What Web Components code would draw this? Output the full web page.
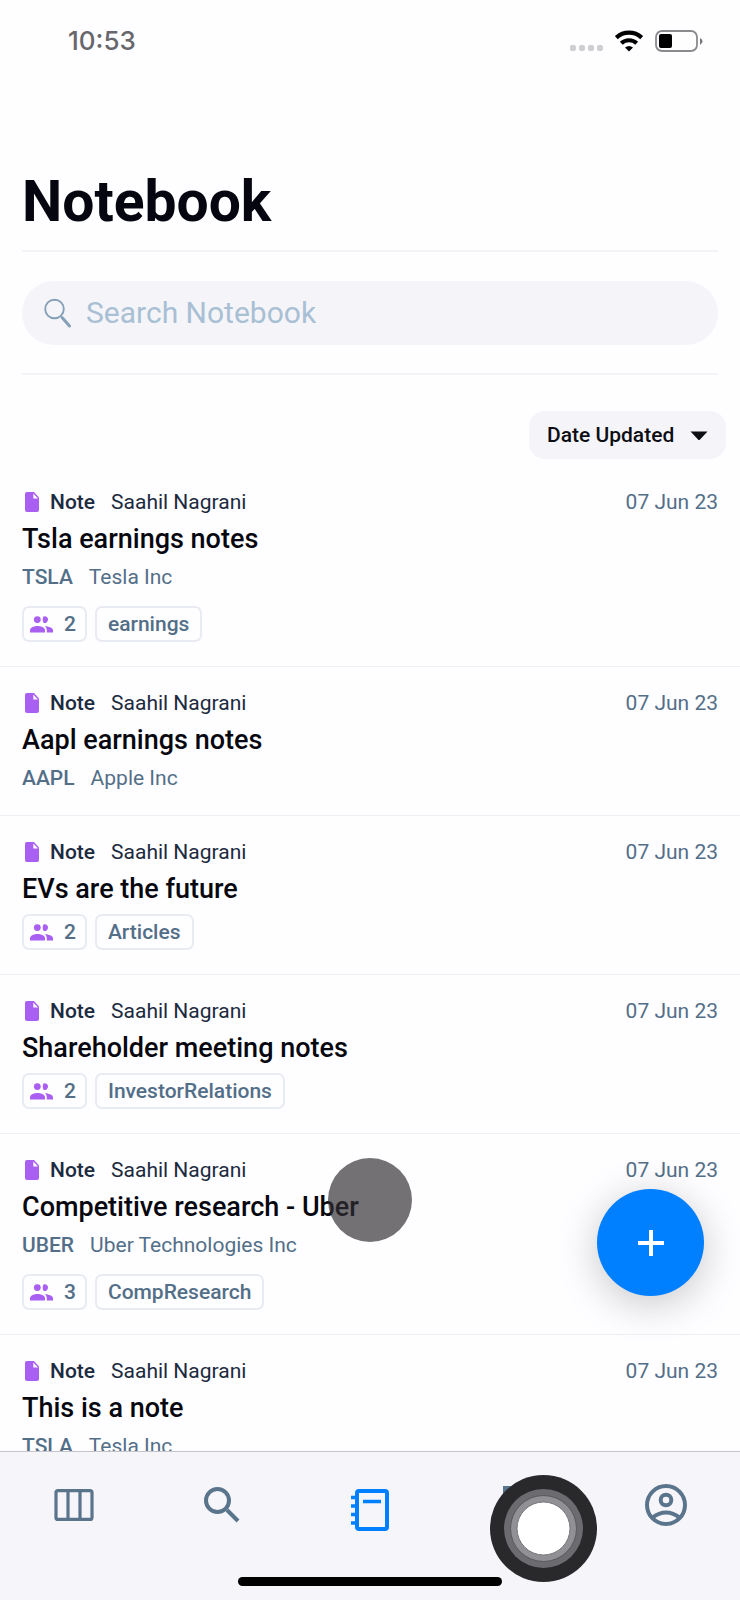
<!DOCTYPE html>
<html lang="en">
<head>
<meta charset="utf-8">
<meta name="viewport" content="width=device-width, initial-scale=1">
<title>Notebook</title>
<style>
  html, body { margin: 0; height: 100%; }
  body {
    font-family: Roboto, "Liberation Sans", sans-serif;
    background: #fefdff;
    color: #05060f;
    --slate: #536f88;
    --ink: #1c2b40;
    --line: #f3f3f7;
    --fill: #f5f5f9;
    --purple: #a95ff2;
    --blue: #007fff;
  }
</style>
</head>
<body>
<notebook-app></notebook-app>

<script>
const define = (name, html, setup) => {
  const template = document.createElement('template');
  template.innerHTML = html;
  customElements.define(name, class extends HTMLElement {
    constructor() {
      super();
      this.attachShadow({ mode: 'open' }).append(template.content.cloneNode(true));
    }
    connectedCallback() { if (setup) setup(this, this.shadowRoot); }
  });
};

/* Clock, signal, wifi and battery */
define('status-bar', `
  <style>
    :host { display: flex; justify-content: space-between; align-items: center; height: 82px; padding: 0 37px 0 68px; }
    time { font: 500 26px/32px Inter, sans-serif; color: #68676b; }
    .state { display: flex; align-items: center; gap: 12px; }
    svg { display: block; }
    .signal { margin-top: 14px; }
  </style>
  <time>10:53</time>
  <div class="state">
    <svg class="signal" width="33" height="6" fill="#cfced3"><rect width="6" height="6" rx="2"/><rect x="9" width="6" height="6" rx="2"/><rect x="18" width="6" height="6" rx="2"/><rect x="27" width="6" height="6" rx="2"/></svg>
    <svg width="28" height="22" viewBox="0 0 28 22" fill="none" stroke="#000" stroke-width="4.2"><path d="M1.3 7.6a18.500 18.500 0 0 1 25.400 0"/><path d="M6.300 13.300a11.300 11.300 0 0 1 15.400 0"/><path d="M14 21.500l-4-4q4-3.200 8 0z" fill="#000" stroke="none"/></svg>
    <svg width="48" height="22" viewBox="0 0 48 22"><rect x="1" y="1" width="41" height="20" rx="6" fill="none" stroke="#8b8a8e" stroke-width="1.800"/><rect x="4" y="4" width="13" height="14" rx="2" fill="#000"/><path d="M45 8q5 3 0 7z" fill="#77767a"/></svg>
  </div>`);

define('search-field', `
  <style>
    :host { display: block; padding: 29px 0 28px; border: solid var(--line); border-width: 2px 0; }
    label { display: flex; align-items: center; gap: 15px; height: 64px; padding: 0 22px; border-radius: 32px; background: var(--fill); }
    svg { flex: none; display: block; }
    input { flex: 1; min-width: 0; padding: 0; border: 0; outline: 0; background: none; font: 400 30px/40px Roboto, sans-serif; color: var(--ink); }
    input::placeholder { color: #a8bfd4; opacity: 1; }
  </style>
  <label>
    <svg width="27" height="30" viewBox="0 0 27 30" fill="none" stroke="#86a0b7"><circle cx="10.500" cy="11" r="9.300" stroke-width="1.900"/><path d="M17 18.500l1.500 1.500" stroke-width="2"/><path d="M18.500 20l7 8" stroke-width="3" stroke-linecap="round"/></svg>
    <input type="text" placeholder="Search Notebook" aria-label="Search Notebook">
  </label>`);

define('sort-menu', `
  <style>
    :host { display: flex; justify-content: flex-end; padding: 36px 14px 7px; }
    .box { position: relative; display: flex; }
    select { appearance: none; box-sizing: border-box; height: 48px; padding: 0 51px 0 18px; border: 0; border-radius: 16px; background: var(--fill); font: 500 21px/28px Roboto, sans-serif; color: #0d0e14; }
    svg { position: absolute; right: 18px; top: 20px; pointer-events: none; }
  </style>
  <div class="box">
    <select aria-label="Sort by"><option>Date Updated</option></select>
    <svg width="18" height="10" viewBox="0 0 18 10" fill="#0d0e14"><path d="M.5 .5h17L10 8.500q-1 1-2 0z"/></svg>
  </div>`);

define('people-chip', `
  <style>
    :host { display: flex; align-items: center; gap: 11px; box-sizing: border-box; height: 36px; padding: 0 9px 0 6px; border: 2px solid #e8ebf2; border-radius: 7px; color: var(--slate); font-size: 21px; font-weight: 500; line-height: 28px; }
    svg { display: block; }
  </style>
  <svg width="23" height="17" viewBox="0 0 23 17" fill="var(--purple)"><circle cx="7.300" cy="3.600" r="3.400"/><path d="M0 16.500v-2.200c0-3 5-4.300 7.500-4.300s7.500 1.300 7.500 4.300v2.200z"/><path d="M13.500.4a3.400 3.400 0 1 1 0 6.400q-1.600-3.200 0-6.400z"/><path d="M16.800 16.500v-2.200q0-2.400-1.800-4c3 .2 8 1.300 8 4v2.200z"/></svg>
  <slot></slot>`);

define('tag-chip', `
  <style>
    :host { display: flex; align-items: center; box-sizing: border-box; height: 36px; padding: 0 11px; border: 2px solid #e8ebf2; border-radius: 7px; color: var(--slate); font-size: 21px; font-weight: 500; line-height: 28px; }
  </style>
  <slot></slot>`);

define('note-item', `
  <style>
    :host { display: block; padding: 24px 22px; border-bottom: 1px solid #eeeef4; font-size: 21px; line-height: 24px; }
    header { display: flex; align-items: center; }
    svg { margin: 0 11px 0 3px; }
    b, strong { font-weight: 500; }
    b { margin-right: 16px; }
    header, header b { color: var(--ink); }
    time { margin-left: auto; color: var(--slate); }
    h2 { margin: 9px 0 0; font-size: 27px; line-height: 32px; font-weight: 500; color: #07080f; }
    .company { display: flex; gap: 16px; margin: 9px 0 0; line-height: 26px; color: var(--slate); }
    .chips { display: flex; gap: 8px; margin-top: 9px; }
    .company:not([hidden]) + .chips { margin-top: 16px; }
    [hidden] { display: none !important; }
  </style>
  <article>
    <header>
      <svg width="14" height="20" viewBox="0 0 14 20"><path d="M2 0h7l5 5.500V18a2 2 0 0 1-2 2H2a2 2 0 0 1-2-2V2a2 2 0 0 1 2-2z" fill="var(--purple)"/><path d="M8.300 1.500v5h4.700z" fill="#fefdff"/></svg>
      <b>Note</b><span>Saahil Nagrani</span><time>07 Jun 23</time>
    </header>
    <h2><slot></slot></h2>
    <p class="company"><strong></strong><span></span></p>
    <div class="chips"><slot name="chip"></slot></div>
  </article>`,
  (host, root) => {
    const company = root.querySelector('.company');
    company.hidden = !host.hasAttribute('ticker');
    company.children[0].textContent = host.getAttribute('ticker');
    company.children[1].textContent = host.getAttribute('company');
    root.querySelector('.chips').hidden = !host.querySelector('[slot=chip]');
  });

define('add-button', `
  <style>
    :host { display: block; }
    button { display: grid; place-items: center; width: 107px; height: 107px; padding: 0; border: 0; border-radius: 50%; background: var(--blue); box-shadow: 0 8px 40px rgba(0, 0, 0, .22); }
  </style>
  <button aria-label="Add note"><svg width="26" height="26" fill="none" stroke="#fff" stroke-width="4"><path d="M13 0v26M0 13h26"/></svg></button>`);

define('tab-bar', `
  <style>
    :host { position: relative; display: block; box-sizing: border-box; height: 149px; border-top: 1px solid #c5c4ca; background: #f6f5fa; }
    nav { display: grid; grid-template-columns: repeat(5, 1fr); }
    a { display: grid; place-items: center; height: 106px; color: #5a748c; }
    a.current { box-sizing: border-box; padding-top: 10px; color: var(--blue); }
    svg { display: block; fill: none; stroke: currentColor; }
    .home { width: 264px; height: 9px; margin: 19px auto 0; border-radius: 5px; background: #000; }
  </style>
  <nav>
    <a href="#boards" aria-label="Boards"><svg width="40" height="32" stroke-width="3.2"><rect x="2" y="1.600" width="36" height="28.800" rx="2"/><path d="M14 1v30M26 1v30"/></svg></a>
    <a href="#search" aria-label="Search"><svg width="36" height="36" stroke-width="4"><circle cx="13.500" cy="13.500" r="11.500"/><path d="M23 23l11 11"/></svg></a>
    <a href="#notebook" aria-label="Notebook" aria-current="page" class="current"><svg width="38" height="42" stroke-width="4"><rect x="6" y="2" width="30" height="38" rx="2"/><path d="M0 8.500h6M0 17h6M0 25.500h6M0 34h6M12 12.500h18" stroke-width="3.500"/></svg></a>
    <a href="#news" aria-label="News"><svg width="30" height="38" stroke-width="4"><path d="M2 2h26v34h-26z"/></svg></a>
    <a href="#account" aria-label="Account"><svg width="42" height="42" stroke-width="4"><circle cx="21" cy="21" r="19"/><circle cx="21" cy="16" r="5.300"/><path d="M7 34q14-11 28 0"/></svg></a>
  </nav>
  <div class="home"></div>`);

define('touch-ring', `
  <style>:host, svg { display: block; }</style>
  <svg width="107" height="107" viewBox="0 0 107 107"><circle cx="53.500" cy="53.500" r="53.500" fill="#29282b"/><circle cx="53.500" cy="53.500" r="39.500" fill="#6c6b6f"/><circle cx="53.500" cy="53.500" r="33" fill="#919095" stroke="#59585c"/><circle cx="53.500" cy="53.500" r="26.500" fill="#fff" stroke="#77767a"/></svg>`);

define('notebook-app', `
  <style>
    :host { display: flex; flex-direction: column; height: 100vh; position: relative; overflow: hidden; }
    .head { padding: 89px 22px 0; }
    h1 { margin: 0; padding-bottom: 17px; font-size: 57px; line-height: 62px; font-weight: 700; color: #05060f; }
    main { flex: 1; min-height: 0; overflow: hidden; }
    add-button { position: absolute; right: 36px; bottom: 304px; }
    .touch { position: absolute; left: 50%; bottom: 358px; width: 84px; height: 84px; margin-left: -42px; border-radius: 50%; background: rgba(48, 46, 50, .68); }
    touch-ring { position: absolute; right: 143px; bottom: 18px; }
  </style>
  <status-bar></status-bar>
  <div class="head"><h1>Notebook</h1><search-field></search-field></div>
  <sort-menu></sort-menu>
  <main>
    <note-item ticker="TSLA" company="Tesla Inc">Tsla earnings notes<people-chip slot="chip">2</people-chip><tag-chip slot="chip">earnings</tag-chip></note-item>
    <note-item ticker="AAPL" company="Apple Inc">Aapl earnings notes</note-item>
    <note-item>EVs are the future<people-chip slot="chip">2</people-chip><tag-chip slot="chip">Articles</tag-chip></note-item>
    <note-item>Shareholder meeting notes<people-chip slot="chip">2</people-chip><tag-chip slot="chip">InvestorRelations</tag-chip></note-item>
    <note-item ticker="UBER" company="Uber Technologies Inc">Competitive research - Uber<people-chip slot="chip">3</people-chip><tag-chip slot="chip">CompResearch</tag-chip></note-item>
    <note-item ticker="TSLA" company="Tesla Inc">This is a note</note-item>
  </main>
  <tab-bar></tab-bar>
  <add-button></add-button>
  <div class="touch"></div>
  <touch-ring></touch-ring>`);
</script>
</body>
</html>
